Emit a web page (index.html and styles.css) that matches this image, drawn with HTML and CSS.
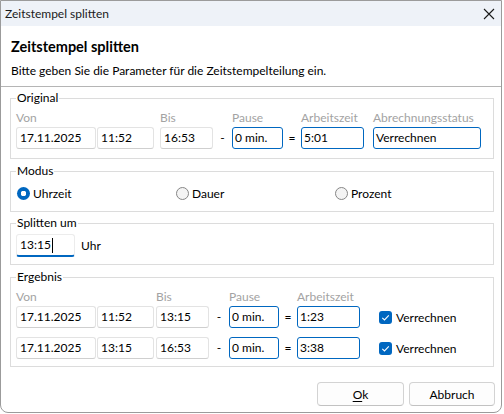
FILE: index.html
```html
<!DOCTYPE html>
<html lang="de">
<head>
<meta charset="utf-8">
<title>Zeitstempel splitten</title>
<link rel="stylesheet" href="styles.css">
</head>
<body>
<div class="window">
  <div class="titlebar">
    <span class="titlebar-text">Zeitstempel splitten</span>
    <svg class="close" width="12" height="12" viewBox="0 0 12 12"><path d="M1 1 L11 11 M11 1 L1 11" stroke="#1a1a1a" stroke-width="1.1" fill="none"/></svg>
  </div>
  <div class="header">
    <div class="header-title">Zeitstempel splitten</div>
    <div class="header-sub">Bitte geben Sie die Parameter für die Zeitstempelteilung ein.</div>
  </div>
  <div class="content">
    <fieldset class="group group-original">
      <legend>Original</legend>
      <div class="grid grid-original">
        <div class="lbl">Von</div><div></div><div class="lbl">Bis</div><div></div><div class="lbl">Pause</div><div></div><div class="lbl">Arbeitszeit</div><div class="lbl">Abrechnungsstatus</div>
        <div class="field f-date">17.11.2025</div>
        <div class="field f-time">11:52</div>
        <div class="field f-bis">16:53</div>
        <div class="op">-</div>
        <div class="field blue f-pause">0 min.</div>
        <div class="op">=</div>
        <div class="field blue f-arb">5:01</div>
        <div class="field blue f-status">Verrechnen</div>
      </div>
    </fieldset>

    <fieldset class="group group-modus">
      <legend>Modus</legend>
      <div class="radios">
        <div class="radio-item"><span class="radio checked"></span>Uhrzeit</div>
        <div class="radio-item"><span class="radio"></span>Dauer</div>
        <div class="radio-item"><span class="radio"></span>Prozent</div>
      </div>
    </fieldset>

    <fieldset class="group group-split">
      <legend>Splitten um</legend>
      <div class="split-row">
        <div class="field focus f-split">13:15<span class="caret"></span></div>
        <span class="unit">Uhr</span>
      </div>
    </fieldset>

    <fieldset class="group group-result">
      <legend>Ergebnis</legend>
      <div class="grid grid-result">
        <div class="lbl">Von</div><div></div><div class="lbl">Bis</div><div></div><div class="lbl">Pause</div><div></div><div class="lbl">Arbeitszeit</div><div></div>

        <div class="field f-date">17.11.2025</div>
        <div class="field f-time">11:52</div>
        <div class="field f-bis">13:15</div>
        <div class="op">-</div>
        <div class="field blue f-pause">0 min.</div>
        <div class="op">=</div>
        <div class="field blue f-arb">1:23</div>
        <div class="check-item"><span class="checkbox"><svg width="13" height="13" viewBox="0 0 13 13"><path d="M3.3 6.8 L5.5 9 L9.8 4.4" stroke="#fff" stroke-width="1.1" fill="none"/></svg></span>Verrechnen</div>

        <div class="field f-date r2">17.11.2025</div>
        <div class="field f-time r2">13:15</div>
        <div class="field f-bis r2">16:53</div>
        <div class="op r2">-</div>
        <div class="field blue f-pause r2">0 min.</div>
        <div class="op r2">=</div>
        <div class="field blue f-arb r2">3:38</div>
        <div class="check-item r2"><span class="checkbox"><svg width="13" height="13" viewBox="0 0 13 13"><path d="M3.3 6.8 L5.5 9 L9.8 4.4" stroke="#fff" stroke-width="1.1" fill="none"/></svg></span>Verrechnen</div>
      </div>
    </fieldset>

    <div class="buttons">
      <button class="btn"><u>O</u>k</button>
      <button class="btn">Abbruch</button>
    </div>
  </div>
</div>
</body>
</html>
```
FILE: styles.css
```css
* { box-sizing: border-box; }
html, body { margin: 0; padding: 0; background: #ffffff; }
body {
  font-family: Lato, "Noto Sans", sans-serif;
  font-size: 12px;
  color: #1a1a1a;
}
.window {
  width: 502px;
  height: 413px;
  border: 1px solid #9b9b9b;
  border-radius: 0 0 8px 8px;
  background: #fff;
  display: flex;
  flex-direction: column;
  overflow: hidden;
}
.titlebar {
  height: 25px;
  flex: none;
  background: #eef2f8;
  display: flex;
  align-items: center;
  justify-content: space-between;
  padding: 0 6px 0 4px;
}
.titlebar-text { line-height: 16px; }
.close { display: block; }
.header {
  padding: 11px 10px 7px;
  border-bottom: 1px solid #b5b5b5;
}
.header-title {
  font-size: 14.5px;
  font-weight: bold;
  line-height: 20px;
  color: #000;
}
.header-sub {
  margin-top: 6px;
  line-height: 16px;
  color: #000;
}
.content {
  padding: 3px 7px 0 9px;
  display: flex;
  flex-direction: column;
}
.group {
  margin: 0;
  padding: 0 5px 9px;
  border: 1px solid #dcdcdc;
  min-width: 0;
}
.group legend {
  padding: 0 1px;
  line-height: 16px;
  color: #000;
}
.group-modus { margin-top: 4px; padding-bottom: 8px; }
.group-split { margin-top: 3px; padding-bottom: 7px; }
.group-result { margin-top: 4px; padding-bottom: 7px; }

.grid {
  display: grid;
  margin-top: 4px;
  align-items: center;
}
.grid-original {
  grid-template-columns: 81px 63px 53px 19px 51px 18px 72px 108px;
  grid-template-rows: 16px 22px;
  row-gap: 1px;
}
.grid-result {
  grid-template-columns: 81px 59px 53px 20px 50px 18px 63px auto;
  grid-template-rows: 16px 22px 30px;
  row-gap: 1px;
}
.grid-result .r2 { margin-top: 8px; }

.lbl {
  color: #a3a3a3;
  line-height: 16px;
  white-space: nowrap;
}
.field {
  height: 22px;
  border: 1px solid #e3e3e3;
  border-bottom-color: #cfcfcf;
  border-radius: 3px;
  background: #fff;
  padding: 0 3px;
  line-height: 20px;
  color: #000;
  white-space: nowrap;
  overflow: hidden;
}
.field.blue { border: 1px solid #0067c0; padding: 0 2px; }
.f-date { width: 80px; }
.f-time { width: 57px; }
.f-bis { width: 53px; }
.f-pause { width: 100%; }
.f-arb { width: 63px; }
.f-status { width: 108px; }
.op { text-align: center; color: #000; line-height: 20px; }

.check-item {
  display: flex;
  align-items: center;
  padding-left: 19px;
  color: #000;
  white-space: nowrap;
}
.checkbox {
  width: 13px;
  height: 13px;
  border-radius: 3px;
  background: #0067c0;
  margin-right: 4px;
  display: block;
}
.checkbox svg { display: block; }

.radios {
  display: grid;
  grid-template-columns: 159px 159px 159px;
  margin-top: 4px;
  margin-left: 1px;
  height: 20px;
  align-items: center;
}
.radio-item { display: flex; align-items: center; color: #000; }
.radio {
  width: 13px;
  height: 13px;
  border-radius: 50%;
  border: 1px solid #868686;
  background: #f4f4f4;
  margin-right: 3px;
  display: block;
}
.radio.checked {
  border: none;
  background: radial-gradient(circle, #fff 0 2.6px, #0067c0 3px);
}

.split-row {
  display: flex;
  align-items: center;
  margin-top: 3px;
}
.field.focus {
  width: 59px;
  height: 23px;
  border: 1px solid #ececec;
  border-bottom: 2px solid #0067c0;
  display: flex;
  align-items: center;
  padding: 0 3px;
}
.caret {
  display: inline-block;
  width: 1px;
  height: 15px;
  background: #000;
  margin-left: 1px;
}
.unit { margin-left: 6px; color: #000; }

.buttons {
  display: flex;
  justify-content: flex-end;
  gap: 5px;
  margin-top: 15px;
  margin-right: -1px;
}
.btn {
  font-family: inherit;
  font-size: 12px;
  color: #000;
  height: 24px;
  width: 87px;
  border: 1px solid #d3d3d3;
  border-bottom-color: #c2c2c2;
  border-radius: 4px;
  background: #fdfdfd;
  padding: 0;
}
.btn + .btn { width: 86px; }
.btn u { text-decoration-thickness: 1px; text-underline-offset: 2px; }
```
